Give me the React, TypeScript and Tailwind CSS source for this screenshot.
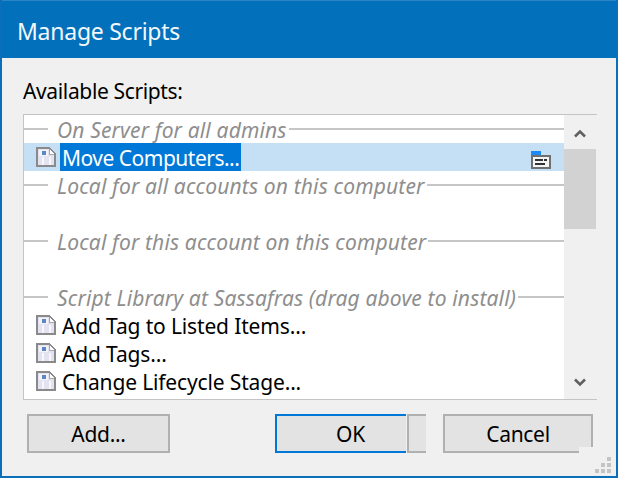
const font = { fontFamily: '"Noto Sans", "Open Sans", sans-serif' }

function ScriptIcon() {
  return (
    <svg width="20" height="20" viewBox="0 0 20 20" className="shrink-0" shapeRendering="crispEdges">
      <path d="M1 1H13L19 7V19H1Z" fill="#e2e2f0" stroke="#8a8a8a" strokeWidth="2" />
      <rect x="3" y="3" width="9" height="6" fill="#f2f2f8" />
      <rect x="6" y="4" width="4" height="4" fill="#5c86c4" />
      <rect x="13" y="10" width="2" height="8" fill="#f8f8fc" />
      <rect x="6" y="10" width="2" height="8" fill="#f8f8fc" />
      <path d="M13 2V7H18" fill="#ffffff" stroke="#a8a8a8" strokeWidth="1" />
    </svg>
  )
}

function FolderIcon() {
  return (
    <svg width="20" height="18" viewBox="0 0 20 18" className="shrink-0" shapeRendering="crispEdges">
      <rect x="0" y="0" width="10" height="4" fill="#1e8bf5" />
      <rect x="1" y="5" width="18" height="12" fill="#f4f4f4" stroke="#6f6f6f" strokeWidth="2" />
      <rect x="4" y="8" width="8" height="2" fill="#333333" />
      <rect x="13" y="8" width="3" height="2" fill="#333333" />
      <rect x="4" y="12" width="10" height="2" fill="#333333" />
    </svg>
  )
}

function Group({ label }: { label: string }) {
  return (
    <div className="flex h-7 items-center">
      <div className="h-0.5 w-6 bg-[#c6c6c6]" />
      <span className="self-start pl-[9px] pr-[2px] text-[21px] italic leading-[30px] tracking-[0.15px] text-[#8e8e8e] whitespace-nowrap">{label}</span>
      <div className="h-0.5 flex-1 bg-[#c6c6c6]" />
    </div>
  )
}

function Script({ label }: { label: string }) {
  return (
    <div className="flex h-7 items-center gap-1.5 pl-3">
      <ScriptIcon />
      <span className="self-start text-[21px] leading-[30px] tracking-[-0.15px] text-black whitespace-nowrap">{label}</span>
    </div>
  )
}

function Chevron({ up }: { up?: boolean }) {
  return (
    <svg width="12" height="9" viewBox="0 0 12 9">
      <path d={up ? 'M1 7.5L6 2.5L11 7.5' : 'M1 1.5L6 6.5L11 1.5'} fill="none" stroke="#606060" strokeWidth="2.6" />
    </svg>
  )
}

export default function App() {
  return (
    <div style={font} className="relative flex h-[478px] w-[618px] flex-col overflow-hidden border-x-2 border-b-2 border-[#0a6fb8] bg-[#f0f0f0]">
      {/* Title bar */}
      <div className="flex h-[58px] shrink-0 items-center border-t border-[#2a84c6] bg-[#0370bb] pl-[15px] pt-[3px] text-[23px] tracking-[-0.25px] text-[#f2f8fc]">
        Manage Scripts
      </div>

      <div className="relative flex flex-1 flex-col pl-[21px] pr-[19px]">
        <div className="mt-[19px] h-[37px] text-[21px] leading-7 tracking-[-0.36px] text-black">Available Scripts:</div>

        {/* List */}
        <div className="flex h-[286px] border-y border-l border-[#c4c4c4]">
          <div className="flex-1 overflow-hidden bg-white">
            <Group label="On Server for all admins" />
            <div className="flex h-7 items-center overflow-hidden bg-[#c5dff5] pl-3 pr-[13px]">
              <ScriptIcon />
              <span className="ml-1 h-7 bg-[#0078d7] px-[2px] text-[21px] leading-[30px] tracking-[-0.5px] text-white whitespace-nowrap">Move Computers...</span>
              <div className="ml-auto mt-[6px]">
                <FolderIcon />
              </div>
            </div>
            <Group label="Local for all accounts on this computer" />
            <div className="h-7" />
            <Group label="Local for this account on this computer" />
            <div className="h-7" />
            <Group label="Script Library at Sassafras (drag above to install)" />
            <Script label="Add Tag to Listed Items..." />
            <Script label="Add Tags..." />
            <Script label="Change Lifecycle Stage..." />
          </div>

          {/* Scrollbar */}
          <div className="flex w-[33px] shrink-0 flex-col pr-px">
            <div className="flex h-[34px] items-center justify-center pt-[2px]">
              <Chevron up />
            </div>
            <div className="h-20 w-full bg-[#d2d2d2]" />
            <div className="flex flex-1 items-end justify-center pb-3">
              <Chevron />
            </div>
          </div>
        </div>

        {/* Buttons */}
        <div className="mt-[14px] flex items-start pl-1">
          <button className="h-[39px] w-[143px] border-2 border-[#b0b0b0] bg-[#e3e3e3] pt-[2px] text-[21px] leading-none tracking-[-0.3px] text-black">Add...</button>
          <div className="ml-[105px] flex">
            <button className="h-[39px] w-[131px] border-2 border-r-0 border-[#0078d7] bg-[#e3e3e3] pl-[18px] pt-[2px] text-[21px] leading-none tracking-[-0.3px] text-black">OK</button>
            <div className="ml-px h-[39px] w-[19px] border-y-2 border-l-2 border-[#b0b0b0] bg-[#e3e3e3]" />
          </div>
          <div className="relative ml-[17px]">
            <button className="h-[39px] w-[150px] border-2 border-[#b0b0b0] bg-[#e3e3e3] pt-[2px] text-[21px] leading-none tracking-[-0.3px] text-black">Cancel</button>
            <div className="absolute bottom-0 right-0 h-1.5 w-[14px] bg-[#f0f0f0]" />
          </div>
        </div>

        {/* Resize grip */}
        <svg width="18" height="18" viewBox="0 0 18 18" className="absolute bottom-[1px] right-[3px]" shapeRendering="crispEdges">
          <g fill="#c4c4c4">
            <rect x="12" y="0" width="4" height="4" />
            <rect x="6" y="6" width="4" height="4" />
            <rect x="12" y="6" width="4" height="4" />
            <rect x="0" y="12" width="4" height="4" />
            <rect x="6" y="12" width="4" height="4" />
            <rect x="12" y="12" width="4" height="4" />
          </g>
        </svg>
      </div>

      {/* sliver of whatever is behind the window */}
      <div className="absolute left-[-2px] top-[458px] h-1 w-0.5 bg-[#3c9a3c]" />
    </div>
  )
}
